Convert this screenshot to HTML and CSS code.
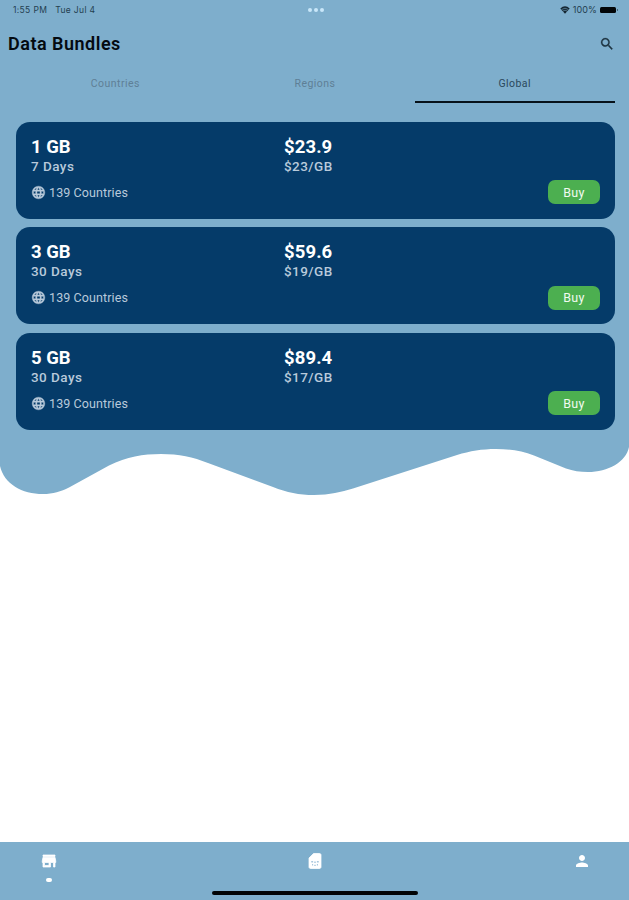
FILE: index.html
```html
<!DOCTYPE html>
<html lang="en">
<head>
    <meta charset="UTF-8">
    <meta name="viewport" content="width=device-width, initial-scale=1.0">
    <title>Data Bundles</title>
    <link rel="stylesheet" href="styles.css">
</head>
<body>
    <div class="top">
        <div class="status-bar">
            <div class="status-left"><span class="time">1:55 PM</span><span class="date">Tue Jul 4</span></div>
            <div class="dots"><i></i><i></i><i></i></div>
            <div class="status-right">
                <svg class="wifi" viewBox="0 0 10 8"><path d="M0.3 2.4Q5-1.7 9.7 2.4L5 7.8Z"/><path class="wifi-gap" d="M1.6 3.5Q5 .9 8.4 3.5M3 5Q5 3.4 7 5"/></svg>
                <span class="percent">100%</span>
                <span class="battery"></span>
            </div>
        </div>

        <header>
            <h1>Data Bundles</h1>
            <svg class="search" viewBox="0 0 24 24"><path d="M15.5 14h-.79l-.28-.27A6.47 6.47 0 0 0 16 9.5 6.5 6.5 0 1 0 9.5 16c1.61 0 3.09-.59 4.23-1.57l.27.28v.79l5 4.99L20.49 19l-4.99-5zm-6 0C7.01 14 5 11.99 5 9.5S7.01 5 9.5 5 14 7.01 14 9.5 11.99 14 9.5 14z"/></svg>
        </header>

        <nav class="tabs">
            <a>Countries</a>
            <a>Regions</a>
            <a class="active">Global</a>
        </nav>

        <main>
            <div class="card">
                <div class="plan"><h2>1 GB</h2><p>7 Days</p></div>
                <div class="price"><h2>$23.9</h2><p>$23/GB</p></div>
                <div class="countries"><svg viewBox="0 0 24 24"><use href="#globe"/></svg>139 Countries</div>
                <button class="btn">Buy</button>
            </div>
            <div class="card">
                <div class="plan"><h2>3 GB</h2><p>30 Days</p></div>
                <div class="price"><h2>$59.6</h2><p>$19/GB</p></div>
                <div class="countries"><svg viewBox="0 0 24 24"><use href="#globe"/></svg>139 Countries</div>
                <button class="btn">Buy</button>
            </div>
            <div class="card">
                <div class="plan"><h2>5 GB</h2><p>30 Days</p></div>
                <div class="price"><h2>$89.4</h2><p>$17/GB</p></div>
                <div class="countries"><svg viewBox="0 0 24 24"><use href="#globe"/></svg>139 Countries</div>
                <button class="btn">Buy</button>
            </div>
        </main>
    </div>

    <svg class="wave" viewBox="0 0 629 66">
        <path d="M0 0V36C4 54 22 64 43 64C53 64 61 61.500 69 57.500L109 35.500C127 26.500 143 24 161 24C179 24 193 27 208 33L273 57C287 62.500 299 65 314 65C330 65 341 62 353 58.500L457 25C470 21 482 19 496 19C510 19 522 21 534 25.500L566 38.500C573 41 580 42 588 42C608 42 626 32 629 17V0Z"/>
    </svg>

    <footer>
        <div class="nav">
            <div class="nav-item">
                <svg class="store" viewBox="0 0 24 24"><path d="M20 4H4v2h16V4zm1 10v-2l-1-5H4l-1 5v2h1v6h10v-6h4v6h2v-6h1zm-9 4H6v-4h6v4z"/></svg>
                <span class="nav-dot"></span>
            </div>
            <div class="nav-item">
                <svg class="sim" viewBox="0 0 24 24"><path d="M20 4c0-1.100-.9-2-2-2h-8L4 8v12c0 1.100.9 2 2 2h12c1.100 0 2-.9 2-2V4z"/><path class="sim-chip" d="M7 12h2.500v2H7zM14.500 12H17v2h-2.500zM11 12.500h2v2h-2zM8 16h1.500v2H8zM14.500 16H16v2h-1.500zM11 17h2v1.500h-2z"/></svg>
            </div>
            <div class="nav-item">
                <svg viewBox="0 0 24 24"><path d="M12 12c2.210 0 4-1.790 4-4s-1.790-4-4-4-4 1.790-4 4 1.790 4 4 4zm0 2c-2.670 0-8 1.340-8 4v2h16v-2c0-2.660-5.330-4-8-4z"/></svg>
            </div>
        </div>
        <div class="home-bar"></div>
    </footer>

    <svg class="icons">
        <symbol id="globe" viewBox="0 0 24 24"><path d="M11.990 2C6.470 2 2 6.480 2 12s4.470 10 9.990 10C17.520 22 22 17.520 22 12S17.520 2 11.990 2zm6.930 6h-2.950c-.32-1.250-.78-2.450-1.380-3.560 1.840.63 3.370 1.910 4.330 3.560zM12 4.040c.83 1.200 1.480 2.530 1.910 3.960h-3.820c.43-1.430 1.080-2.760 1.910-3.960zM4.260 14C4.100 13.360 4 12.690 4 12s.1-1.360.26-2h3.380c-.08.66-.14 1.320-.14 2s.06 1.340.14 2H4.260zm.82 2h2.950c.32 1.250.78 2.450 1.380 3.560-1.840-.63-3.370-1.900-4.330-3.560zm2.950-8H5.080c.96-1.660 2.490-2.930 4.330-3.560C8.810 5.550 8.350 6.750 8.030 8zM12 19.960c-.83-1.200-1.480-2.530-1.910-3.960h3.820c-.43 1.430-1.080 2.760-1.910 3.960zM14.340 14H9.660c-.09-.66-.16-1.320-.16-2s.07-1.350.16-2h4.680c.09.65.16 1.320.16 2s-.07 1.340-.16 2zm.25 5.560c.6-1.110 1.060-2.310 1.380-3.560h2.950c-.96 1.650-2.490 2.930-4.330 3.560zM16.360 14c.08-.66.14-1.320.14-2s-.06-1.340-.14-2h3.380c.16.64.26 1.310.26 2s-.1 1.360-.26 2h-3.380z"/></symbol>
    </svg>
</body>
</html>
```
FILE: styles.css
```css
* {
    margin: 0;
    padding: 0;
    box-sizing: border-box;
}

body {
    font-family: Roboto, 'Liberation Sans', sans-serif;
    background-color: #fff;
    height: 100vh;
    display: flex;
    flex-direction: column;
    overflow: hidden;
}

svg {
    display: block;
}

.top {
    background-color: #7eaecc;
    height: 430px;
}

/* status bar */
.status-bar {
    height: 19px;
    padding: 0 11px 0 13px;
    display: grid;
    grid-template-columns: 1fr auto 1fr;
    align-items: center;
    font-family: Inter, sans-serif;
    font-size: 8.5px;
    color: #243e50;
}

.status-left {
    display: flex;
    gap: 8px;
    letter-spacing: 0.35px;
}

.dots {
    display: flex;
    gap: 2px;
}

.dots i {
    width: 4px;
    height: 4px;
    border-radius: 50%;
    background-color: #c9e7fa;
}

.status-right {
    display: flex;
    justify-content: flex-end;
    align-items: center;
    gap: 3px;
}

.percent {
    font-size: 9px;
    letter-spacing: 0.1px;
}

.wifi {
    width: 10px;
    height: 8px;
    fill: #142530;
}

.wifi-gap {
    fill: none;
    stroke: #7eaecc;
    stroke-width: 0.6;
}

.battery {
    width: 16px;
    height: 6px;
    margin-right: 2px;
    border-radius: 1.5px;
    background-color: #020507;
    position: relative;
}

.battery::after {
    content: "";
    position: absolute;
    right: -2px;
    top: 2px;
    width: 1px;
    height: 2px;
    background-color: #49687c;
}

header {
    height: 50px;
    padding: 0 14px 0 8px;
    display: flex;
    align-items: center;
    justify-content: space-between;
}

h1 {
    font-size: 18px;
    font-weight: 600;
    letter-spacing: 0.5px;
    line-height: 20px;
    color: #040a10;
}

.search {
    width: 16px;
    height: 16px;
    fill: #1e3442;
    stroke: #1e3442;
    stroke-width: 0.4;
}

/* tabs */
.tabs {
    height: 33.5px;
    padding: 0 14.5px 0 15.5px;
    display: grid;
    grid-template-columns: repeat(3, 1fr);
}

.tabs a {
    text-align: center;
    font-size: 10.5px;
    line-height: 30px;
    letter-spacing: 0.45px;
    color: #5e7f96;
}

.tabs .active {
    color: #2a485c;
    border-bottom: 2px solid #07121a;
}

/* bundles */
main {
    padding: 19px 14.5px 0 15.5px;
    display: flex;
    flex-direction: column;
    gap: 8.5px;
}

.card {
    height: 97px;
    padding: 15px 14.5px 14.5px 15.5px;
    border-radius: 14px;
    background-color: #053b69;
    display: grid;
    grid-template-columns: 253px 1fr auto;
    grid-template-rows: 1fr 24px;
}

.card h2 {
    font-size: 18.5px;
    line-height: 21px;
    font-weight: 700;
    color: #fff;
}

.card p {
    font-size: 13.5px;
    line-height: 17px;
    font-weight: 500;
    letter-spacing: 0.45px;
    color: #b9cadb;
}

.price {
    grid-column: 2 / 4;
}

.card .price h2 {
    letter-spacing: 0.1px;
}

.countries {
    grid-column: 1 / 3;
    display: flex;
    align-items: center;
    gap: 3px;
    font-size: 12.5px;
    letter-spacing: 0.1px;
    color: #b9cadb;
}

.countries svg {
    width: 15px;
    height: 15px;
    fill: #b9cadb;
    stroke: #b9cadb;
    stroke-width: 0.7;
}

.btn {
    width: 52px;
    height: 24px;
    border: none;
    border-radius: 7px;
    background-color: #4caf50;
    color: #f1faf1;
    font-family: inherit;
    font-size: 12.5px;
    letter-spacing: 0.3px;
}

.wave {
    width: 629px;
    height: 66px;
    fill: #7eaecc;
}

/* bottom nav */
footer {
    margin-top: auto;
    height: 58px;
    background-color: #7eaecc;
    display: flex;
    flex-direction: column;
    align-items: center;
}

.nav {
    width: 100%;
    height: 48.5px;
    padding: 10px 38.5px 0 39.5px;
    display: flex;
    justify-content: space-between;
}

.nav-item {
    display: flex;
    flex-direction: column;
    align-items: center;
}

.nav-item svg {
    width: 18px;
    height: 18px;
    fill: #fff;
}

.nav-item .store,
.nav-item .sim {
    stroke: #fff;
    stroke-width: 1;
    stroke-linejoin: round;
}

.nav-item .sim-chip {
    fill: #a9c8de;
    stroke: none;
}

.nav-dot {
    width: 6px;
    height: 4px;
    margin-top: 8px;
    border-radius: 2px;
    background-color: #fff;
}

.home-bar {
    width: 206px;
    height: 4px;
    border-radius: 2px;
    background-color: #020406;
}

.icons {
    display: none;
}
```
